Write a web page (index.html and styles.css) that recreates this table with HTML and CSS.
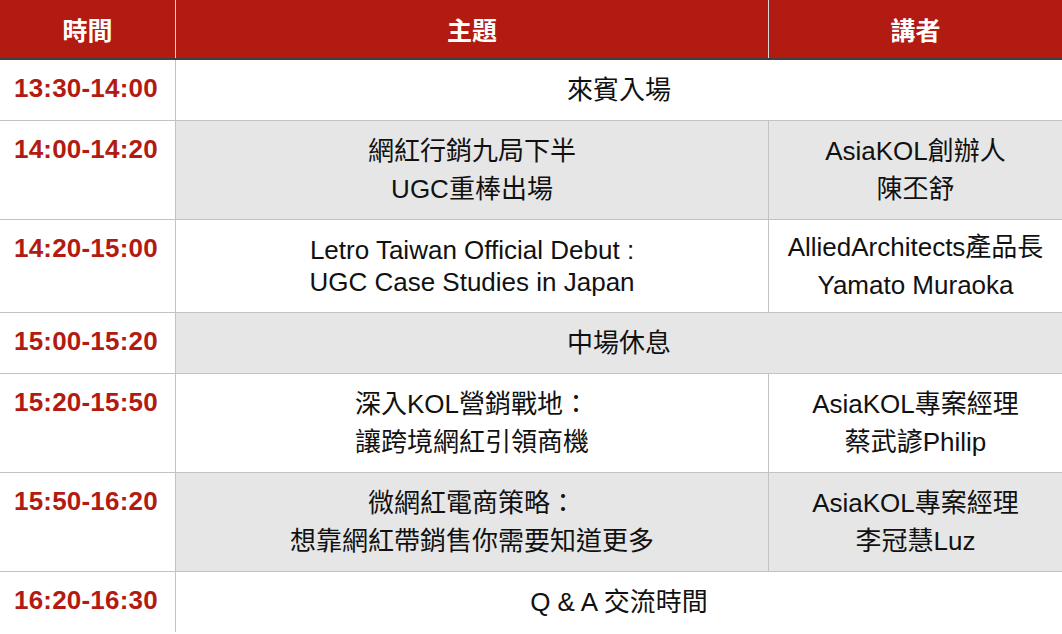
FILE: index.html
```html
<!DOCTYPE html>
<html lang="zh-Hant">
<head>
<meta charset="utf-8">
<title>議程</title>
<link rel="stylesheet" href="styles.css">
</head>
<body>
<div class="agenda">
  <div class="head">
    <div class="hcell c-time">時間</div>
    <div class="hcell c-topic">主題</div>
    <div class="hcell c-speaker">講者</div>
  </div>

  <div class="row h1">
    <div class="cell c-time"><span class="time">13:30-14:00</span></div>
    <div class="cell c-span"><div class="ln">來賓入場</div></div>
  </div>

  <div class="row h2 alt">
    <div class="cell c-time"><span class="time">14:00-14:20</span></div>
    <div class="cell c-topic"><div class="ln">網紅行銷九局下半</div><div class="ln">UGC重棒出場</div></div>
    <div class="cell c-speaker"><div class="ln">AsiaKOL創辦人</div><div class="ln">陳丕舒</div></div>
  </div>

  <div class="row h3">
    <div class="cell c-time"><span class="time">14:20-15:00</span></div>
    <div class="cell c-topic"><div class="ln lat">Letro Taiwan Official Debut :</div><div class="ln lat">UGC Case Studies in Japan</div></div>
    <div class="cell c-speaker"><div class="ln">AlliedArchitects產品長</div><div class="ln">Yamato Muraoka</div></div>
  </div>

  <div class="row h1 alt">
    <div class="cell c-time"><span class="time">15:00-15:20</span></div>
    <div class="cell c-span"><div class="ln">中場休息</div></div>
  </div>

  <div class="row h2">
    <div class="cell c-time"><span class="time">15:20-15:50</span></div>
    <div class="cell c-topic"><div class="ln">深入KOL營銷戰地：</div><div class="ln">讓跨境網紅引領商機</div></div>
    <div class="cell c-speaker"><div class="ln">AsiaKOL專案經理</div><div class="ln">蔡武諺Philip</div></div>
  </div>

  <div class="row h2 alt">
    <div class="cell c-time"><span class="time">15:50-16:20</span></div>
    <div class="cell c-topic"><div class="ln">微網紅電商策略：</div><div class="ln">想靠網紅帶銷售你需要知道更多</div></div>
    <div class="cell c-speaker"><div class="ln">AsiaKOL專案經理</div><div class="ln">李冠慧Luz</div></div>
  </div>

  <div class="row h1 last">
    <div class="cell c-time"><span class="time">16:20-16:30</span></div>
    <div class="cell c-span"><div class="ln">Q &amp; A 交流時間</div></div>
  </div>
</div>
</body>
</html>
```

FILE: styles.css
```css
html, body {
  margin: 0;
  padding: 0;
  background: #ffffff;
}

body {
  font-family: "Liberation Sans", "Noto Sans CJK TC", sans-serif;
  font-size: 26px;
  color: #111111;
}

.agenda {
  width: 1062px;
}

.head {
  display: flex;
  height: 58px;
  background: #b21b12;
  border-bottom: 2px solid #404040;
}

.hcell {
  display: flex;
  align-items: center;
  justify-content: center;
  color: #ffffff;
  font-weight: bold;
  font-size: 25px;
  box-sizing: border-box;
}

.hcell.c-time,
.hcell.c-topic {
  border-right: 1px solid #d9d9d9;
}

.c-time {
  width: 176px;
  flex: 0 0 176px;
}

.c-topic {
  width: 593px;
  flex: 0 0 593px;
}

.c-speaker {
  flex: 1 1 auto;
}

.c-span {
  flex: 1 1 auto;
}

.row {
  display: flex;
  border-bottom: 1px solid #c2c2c2;
  box-sizing: content-box;
}

.row.last {
  border-bottom: none;
}

.h1 { height: 60px; }
.h2 { height: 98px; }
.h3 { height: 92px; }

.cell {
  box-sizing: border-box;
  display: flex;
  flex-direction: column;
  align-items: center;
  justify-content: center;
  text-align: center;
}

.cell.c-time {
  background: #ffffff;
  border-right: 1px solid #c2c2c2;
  align-items: flex-start;
  justify-content: flex-start;
  padding: 9px 0 0 14px;
}

.cell.c-topic {
  border-right: 1px solid #c2c2c2;
}

.alt .c-topic,
.alt .c-speaker,
.alt .c-span {
  background: #e6e6e6;
}

.time {
  color: #b21b12;
  font-weight: bold;
  font-size: 26px;
  line-height: 38px;
  letter-spacing: 0.2px;
}

.ln {
  line-height: 38px;
  white-space: nowrap;
}

.ln.lat {
  line-height: 32px;
}
```
